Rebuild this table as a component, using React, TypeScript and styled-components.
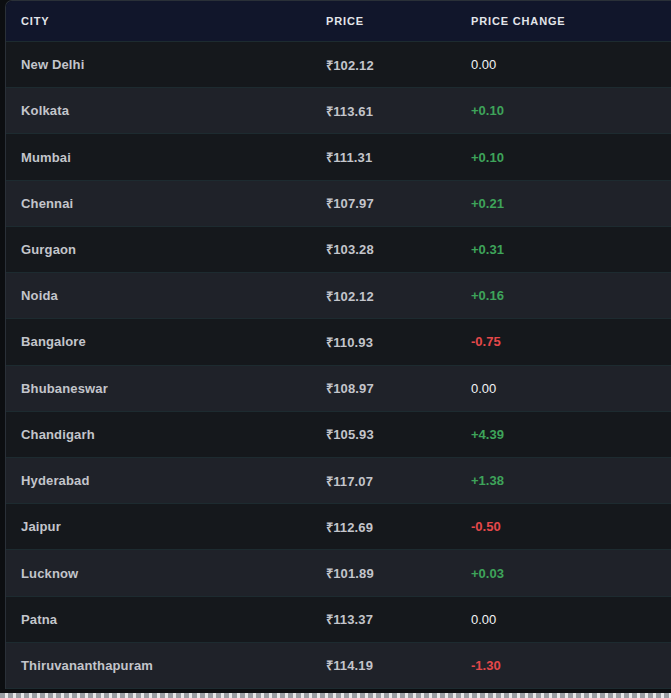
import React from 'react'
import styled, { createGlobalStyle } from 'styled-components'

const GlobalStyle = createGlobalStyle`
  html, body {
    margin: 0;
    padding: 0;
    background: #0c0e11;
  }
  body {
    font-family: 'Liberation Sans', Arial, sans-serif;
  }
`

const Page = styled.div`
  width: 671px;
  height: 698px;
  overflow: hidden;
  display: flex;
  flex-direction: column;
  padding-left: 5px;
  box-sizing: border-box;
`

const Table = styled.div`
  width: 680px;
  border-left: 1px solid #2a3038;
  border-top: 1px solid #2a3038;
  border-top-left-radius: 7px;
  overflow: hidden;
`

const Row = styled.div<{ $head?: boolean; $alt?: boolean }>`
  display: grid;
  grid-template-columns: 305px 145px 1fr;
  align-items: center;
  box-sizing: border-box;
  height: ${p => (p.$head ? '41px' : '46.23px')};
  background: ${p => (p.$head ? '#11162b' : p.$alt ? '#1f2229' : '#15181c')};
  border-bottom: 1px solid #1d2b30;
`

const HeadCell = styled.div`
  padding-left: 15px;
  color: #e3e5ea;
  font-size: 11px;
  font-weight: 700;
  letter-spacing: 0.85px;
  text-transform: uppercase;
`

const Cell = styled.div`
  padding-left: 15px;
  color: #c3c5cb;
  font-size: 13px;
  font-weight: 700;
  letter-spacing: 0.15px;
`

const Change = styled.div<{ $dir: 'up' | 'down' | 'flat' }>`
  padding-left: 15px;
  font-size: 13px;
  font-weight: ${p => (p.$dir === 'flat' ? 400 : 700)};
  color: ${p => (p.$dir === 'up' ? '#3ea45a' : p.$dir === 'down' ? '#e5484a' : '#f2f3f5')};
`

const BottomEdge = styled.div`
  margin-top: auto;
  margin-left: -5px;
  height: 5px;
  background: repeating-linear-gradient(90deg, #9a9ea4 0 5px, #e6e7e9 5px 8px);
`

const prices = [
  ['New Delhi', '102.12', '0.00'],
  ['Kolkata', '113.61', '+0.10'],
  ['Mumbai', '111.31', '+0.10'],
  ['Chennai', '107.97', '+0.21'],
  ['Gurgaon', '103.28', '+0.31'],
  ['Noida', '102.12', '+0.16'],
  ['Bangalore', '110.93', '-0.75'],
  ['Bhubaneswar', '108.97', '0.00'],
  ['Chandigarh', '105.93', '+4.39'],
  ['Hyderabad', '117.07', '+1.38'],
  ['Jaipur', '112.69', '-0.50'],
  ['Lucknow', '101.89', '+0.03'],
  ['Patna', '113.37', '0.00'],
  ['Thiruvananthapuram', '114.19', '-1.30'],
]

const direction = (change: string) =>
  change.startsWith('+') ? 'up' : change.startsWith('-') ? 'down' : 'flat'

const App = () => {
  return (
    <>
      <GlobalStyle />
      <Page>
        <Table>
          <Row $head>
            <HeadCell>City</HeadCell>
            <HeadCell>Price</HeadCell>
            <HeadCell>Price Change</HeadCell>
          </Row>
          {prices.map(([city, price, change], i) => (
            <Row key={city} $alt={i % 2 === 1}>
              <Cell>{city}</Cell>
              <Cell>₹{price}</Cell>
              <Change $dir={direction(change)}>{change}</Change>
            </Row>
          ))}
        </Table>
        <BottomEdge />
      </Page>
    </>
  )
}

export default App
